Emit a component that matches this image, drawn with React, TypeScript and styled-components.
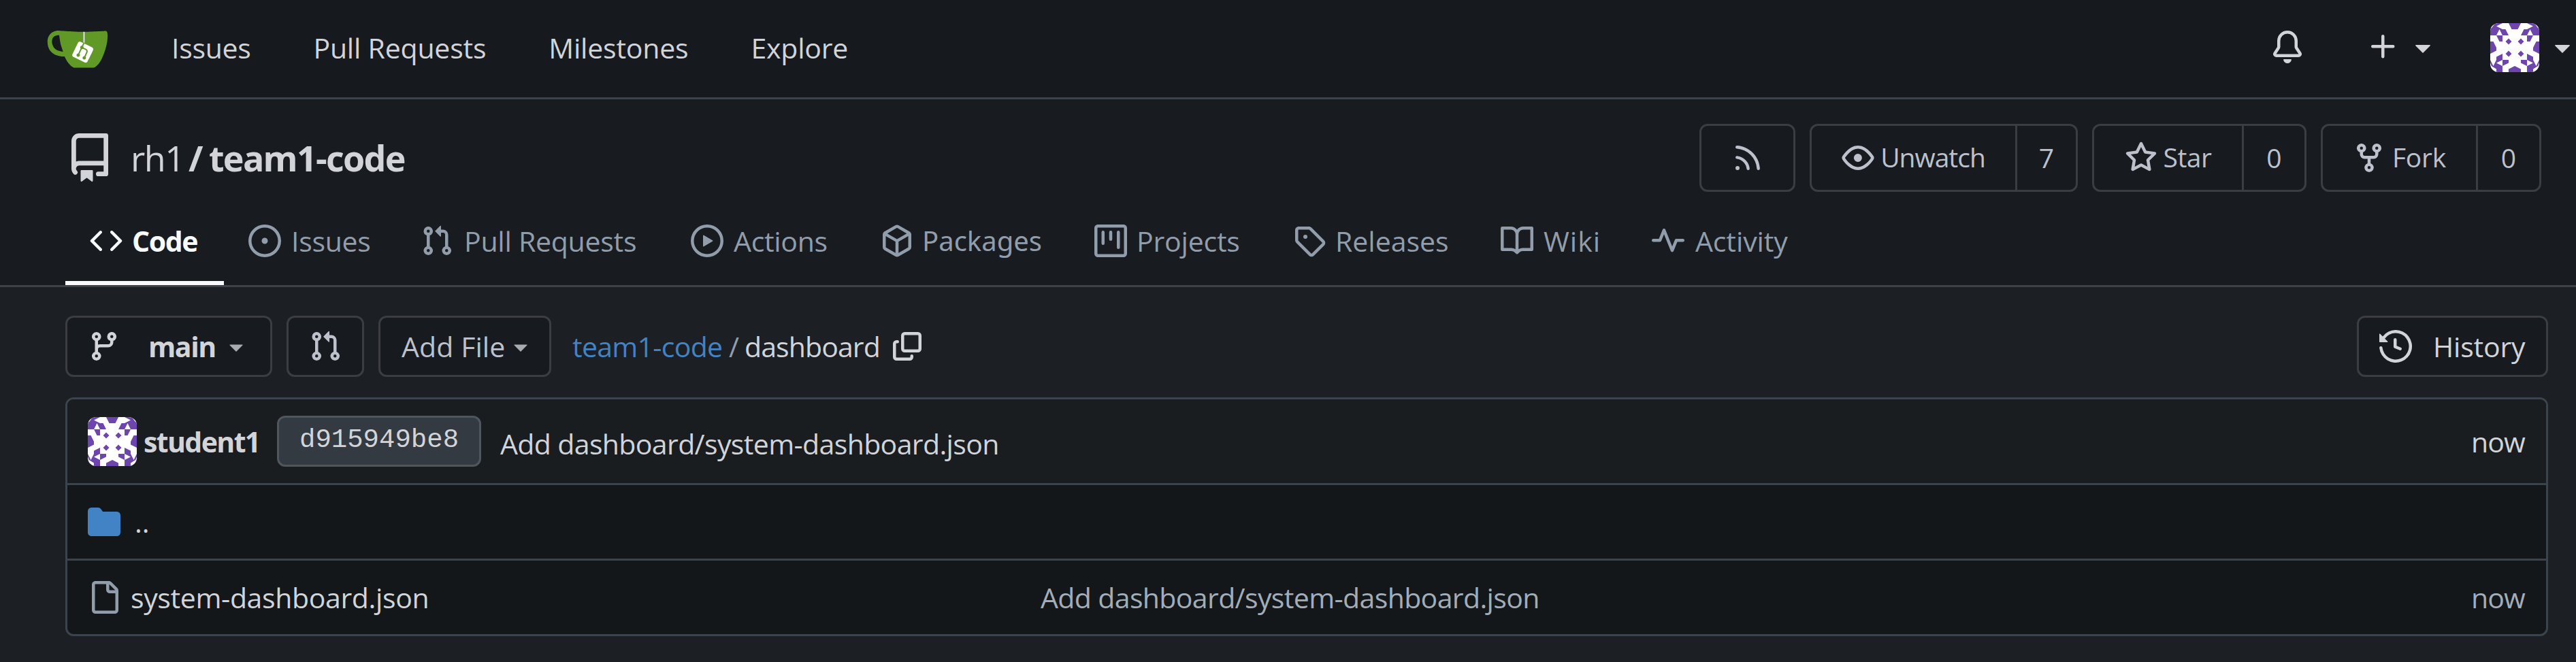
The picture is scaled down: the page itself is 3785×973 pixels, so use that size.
import React from 'react';
import styled, { createGlobalStyle } from 'styled-components';

const color = {
  body: '#1c1f24',
  nav: '#16191d',
  secondaryNav: '#181b20',
  button: '#171a1f',
  boxHeader: '#1a1d20',
  boxBody: '#131719',
  line: '#3b444c',
  buttonLine: '#3b3d42',
  text: '#d2d4d8',
  textLight: '#bcc1cb',
  textMuted: '#929dab',
  textCell: '#a3adb8',
  primary: '#4183c4',
  active: '#f8fafb',
};

const GlobalStyle = createGlobalStyle`
  *, *::before, *::after { box-sizing: border-box; }
  body {
    margin: 0;
    background: ${color.body};
    color: ${color.text};
    font-family: "Open Sans", "Noto Sans", sans-serif;
    font-size: 41px;
    line-height: 60px;
    overflow: hidden;
  }
`;

/* ---------- icons ---------- */

const paths = {
  repo: 'M2 2.5A2.5 2.5 0 0 1 4.5 0h8.75a.75.75 0 0 1 .75.75v12.5a.75.75 0 0 1-.75.75h-2.5a.75.75 0 0 1 0-1.5h1.75v-2h-8a1 1 0 0 0-.714 1.7.75.75 0 1 1-1.072 1.05A2.495 2.495 0 0 1 2 11.5Zm10.5-1h-8a1 1 0 0 0-1 1v6.708A2.486 2.486 0 0 1 4.5 9h8ZM5 12.25a.25.25 0 0 1 .25-.25h3.5a.25.25 0 0 1 .25.25v3.25a.25.25 0 0 1-.4.2l-1.45-1.087a.249.249 0 0 0-.3 0L5.4 15.7a.25.25 0 0 1-.4-.2Z',
  code: 'm11.28 3.22 4.25 4.25a.75.75 0 0 1 0 1.06l-4.25 4.25a.749.749 0 0 1-1.275-.326.749.749 0 0 1 .215-.734L13.94 8l-3.72-3.72a.749.749 0 0 1 .326-1.275.749.749 0 0 1 .734.215Zm-6.56 0a.751.751 0 0 1 1.042.018.751.751 0 0 1 .018 1.042L2.06 8l3.72 3.72a.749.749 0 0 1-.326 1.275.749.749 0 0 1-.734-.215L.47 8.53a.75.75 0 0 1 0-1.06Z',
  issue: 'M8 9.5a1.5 1.5 0 1 0 0-3 1.5 1.5 0 0 0 0 3ZM8 0a8 8 0 1 1 0 16A8 8 0 0 1 8 0ZM1.5 8a6.5 6.5 0 1 0 13 0 6.5 6.5 0 0 0-13 0Z',
  pull: 'M1.5 3.25a2.25 2.25 0 1 1 3 2.122v5.256a2.251 2.251 0 1 1-1.5 0V5.372A2.25 2.25 0 0 1 1.5 3.25Zm5.677-.177L9.573.677A.25.25 0 0 1 10 .854V2.5h1A2.5 2.5 0 0 1 13.5 5v5.628a2.251 2.251 0 1 1-1.5 0V5a1 1 0 0 0-1-1h-1v1.646a.25.25 0 0 1-.427.177L7.177 3.427a.25.25 0 0 1 0-.354ZM3.75 2.5a.75.75 0 1 0 0 1.5.75.75 0 0 0 0-1.5Zm0 9.5a.75.75 0 1 0 0 1.5.75.75 0 0 0 0-1.5Zm8.25.75a.75.75 0 1 0 1.5 0 .75.75 0 0 0-1.5 0Z',
  play: 'M8 0a8 8 0 1 1 0 16A8 8 0 0 1 8 0ZM1.5 8a6.5 6.5 0 1 0 13 0 6.5 6.5 0 0 0-13 0Zm4.879-2.773 4.264 2.559a.25.25 0 0 1 0 .428l-4.264 2.559A.25.25 0 0 1 6 10.559V5.442a.25.25 0 0 1 .379-.215Z',
  package: 'm8.878.392 5.25 3.045c.54.314.872.89.872 1.514v6.098a1.75 1.75 0 0 1-.872 1.514l-5.25 3.045a1.75 1.75 0 0 1-1.756 0l-5.25-3.045A1.75 1.75 0 0 1 1 11.049V4.951c0-.624.332-1.201.872-1.514L7.122.392a1.75 1.75 0 0 1 1.756 0ZM7.875 1.69l-4.63 2.685L8 7.133l4.755-2.758-4.63-2.685a.248.248 0 0 0-.25 0ZM2.5 5.677v5.372c0 .09.047.171.125.216l4.625 2.683V8.432Zm6.25 8.271 4.625-2.683a.25.25 0 0 0 .125-.216V5.677L8.75 8.432Z',
  project: 'M1.75 0h12.5C15.216 0 16 .784 16 1.75v12.5A1.75 1.75 0 0 1 14.25 16H1.75A1.75 1.75 0 0 1 0 14.25V1.75C0 .784.784 0 1.75 0ZM1.5 1.75v12.5c0 .138.112.25.25.25h12.5a.25.25 0 0 0 .25-.25V1.75a.25.25 0 0 0-.25-.25H1.75a.25.25 0 0 0-.25.25ZM11.75 3a.75.75 0 0 1 .75.75v7.5a.75.75 0 0 1-1.5 0v-7.5a.75.75 0 0 1 .75-.75Zm-8.25.75a.75.75 0 0 1 1.5 0v5.5a.75.75 0 0 1-1.5 0ZM8 3a.75.75 0 0 1 .75.75v3.5a.75.75 0 0 1-1.5 0v-3.5A.75.75 0 0 1 8 3Z',
  tag: 'M1 7.775V2.75C1 1.784 1.784 1 2.75 1h5.025c.464 0 .91.184 1.238.513l6.25 6.25a1.75 1.75 0 0 1 0 2.474l-5.026 5.026a1.75 1.75 0 0 1-2.474 0l-6.25-6.25A1.752 1.752 0 0 1 1 7.775Zm1.5 0c0 .066.026.13.073.177l6.25 6.25a.25.25 0 0 0 .354 0l5.025-5.025a.25.25 0 0 0 0-.354l-6.25-6.25a.25.25 0 0 0-.177-.073H2.75a.25.25 0 0 0-.25.25ZM6 5a1 1 0 1 1 0 2 1 1 0 0 1 0-2Z',
  book: 'M0 1.75A.75.75 0 0 1 .75 1h4.253c1.227 0 2.317.59 3 1.501A3.743 3.743 0 0 1 11.006 1h4.245a.75.75 0 0 1 .75.75v10.5a.75.75 0 0 1-.75.75h-4.507a2.25 2.25 0 0 0-1.591.659l-.622.621a.75.75 0 0 1-1.06 0l-.622-.621A2.25 2.25 0 0 0 5.258 13H.75a.75.75 0 0 1-.75-.75Zm7.251 10.324.004-5.073-.002-2.253A2.25 2.25 0 0 0 5.003 2.5H1.5v9h3.757a3.75 3.75 0 0 1 1.994.574ZM8.755 4.75l-.004 7.322a3.752 3.752 0 0 1 1.992-.572H14.5v-9h-3.495a2.25 2.25 0 0 0-2.25 2.25Z',
  pulse: 'M6 2c.306 0 .582.187.696.471L10 10.731l1.304-3.26A.751.751 0 0 1 12 7h3.25a.75.75 0 0 1 0 1.5h-2.742l-1.812 4.528a.751.751 0 0 1-1.392 0L6 4.77 4.696 8.03A.75.75 0 0 1 4 8.5H.75a.75.75 0 0 1 0-1.5h2.742l1.812-4.529A.751.751 0 0 1 6 2Z',
  rss: 'M2.002 2.725a.75.75 0 0 1 .797-.699C8.79 2.42 13.58 7.21 13.974 13.201a.75.75 0 0 1-1.497.098 10.502 10.502 0 0 0-9.776-9.776.747.747 0 0 1-.7-.798ZM2.84 7.05h-.002a7.002 7.002 0 0 1 6.113 6.111.75.75 0 0 1-1.49.178 5.503 5.503 0 0 0-4.8-4.8.75.75 0 0 1 .179-1.489ZM2 13a1 1 0 1 1 2 0 1 1 0 0 1-2 0Z',
  eye: 'M8 2c1.981 0 3.671.992 4.933 2.078 1.27 1.091 2.187 2.345 2.637 3.023a1.62 1.62 0 0 1 0 1.798c-.45.678-1.367 1.932-2.637 3.023C11.67 13.008 9.981 14 8 14c-1.981 0-3.671-.992-4.933-2.078C1.797 10.83.88 9.576.43 8.898a1.62 1.62 0 0 1 0-1.798c.45-.677 1.367-1.931 2.637-3.022C4.33 2.992 6.019 2 8 2ZM1.679 7.932a.12.12 0 0 0 0 .136c.411.622 1.241 1.75 2.366 2.717C5.176 11.758 6.527 12.5 8 12.5c1.473 0 2.825-.742 3.955-1.715 1.124-.967 1.954-2.096 2.366-2.717a.12.12 0 0 0 0-.136c-.412-.621-1.242-1.75-2.366-2.717C10.824 4.242 9.473 3.5 8 3.5c-1.473 0-2.825.742-3.955 1.715-1.124.967-1.954 2.096-2.366 2.717ZM8 10a2 2 0 1 1-.001-3.999A2 2 0 0 1 8 10Z',
  star: 'M8 .25a.75.75 0 0 1 .673.418l1.882 3.815 4.21.612a.75.75 0 0 1 .416 1.279l-3.046 2.97.719 4.192a.751.751 0 0 1-1.088.791L8 12.347l-3.766 1.98a.75.75 0 0 1-1.088-.79l.72-4.194L.818 6.374a.75.75 0 0 1 .416-1.28l4.21-.611L7.327.668A.75.75 0 0 1 8 .25Zm0 2.445L6.615 5.5a.75.75 0 0 1-.564.41l-3.097.45 2.24 2.184a.75.75 0 0 1 .216.664l-.528 3.084 2.769-1.456a.75.75 0 0 1 .698 0l2.77 1.456-.53-3.084a.75.75 0 0 1 .216-.664l2.24-2.183-3.096-.45a.75.75 0 0 1-.564-.41L8 2.694Z',
  fork: 'M5 5.372v.878c0 .414.336.75.75.75h4.5a.75.75 0 0 0 .75-.75v-.878a2.25 2.25 0 1 1 1.5 0v.878a2.25 2.25 0 0 1-2.25 2.25h-1.5v2.128a2.251 2.251 0 1 1-1.5 0V8.5h-1.5A2.25 2.25 0 0 1 3.5 6.25v-.878a2.25 2.25 0 1 1 1.5 0ZM5 3.25a.75.75 0 1 0-1.5 0 .75.75 0 0 0 1.5 0Zm6.75.75a.75.75 0 1 0 0-1.5.75.75 0 0 0 0 1.5Zm-3 8.75a.75.75 0 1 0-1.5 0 .75.75 0 0 0 1.5 0Z',
  branch: 'M9.5 3.25a2.25 2.25 0 1 1 3 2.122V6A2.5 2.5 0 0 1 10 8.5H6a1 1 0 0 0-1 1v1.128a2.251 2.251 0 1 1-1.5 0V5.372a2.25 2.25 0 1 1 1.5 0v1.836A2.493 2.493 0 0 1 6 7h4a1 1 0 0 0 1-1v-.628A2.25 2.25 0 0 1 9.5 3.25Zm-6 0a.75.75 0 1 0 1.5 0 .75.75 0 0 0-1.5 0Zm8.25-.75a.75.75 0 1 0 0 1.5.75.75 0 0 0 0-1.5ZM4.25 12a.75.75 0 1 0 0 1.5.75.75 0 0 0 0-1.5Z',
  history: 'm.427 1.927 1.215 1.215a8.002 8.002 0 1 1-1.6 5.685.75.75 0 1 1 1.493-.154 6.5 6.5 0 1 0 1.18-4.458l1.358 1.358A.25.25 0 0 1 3.896 6H.25A.25.25 0 0 1 0 5.75V2.104a.25.25 0 0 1 .427-.177ZM7.75 4a.75.75 0 0 1 .75.75v2.992l2.028.812a.75.75 0 0 1-.557 1.392l-2.5-1A.751.751 0 0 1 7 8.25v-3.5A.75.75 0 0 1 7.75 4Z',
  file: 'M2 1.75C2 .784 2.784 0 3.75 0h6.586c.464 0 .909.184 1.237.513l2.914 2.914c.329.328.513.773.513 1.237v9.586A1.75 1.75 0 0 1 13.25 16h-9.5A1.75 1.75 0 0 1 2 14.25Zm1.75-.25a.25.25 0 0 0-.25.25v12.5c0 .138.112.25.25.25h9.5a.25.25 0 0 0 .25-.25V6h-2.75A1.75 1.75 0 0 1 9 4.25V1.5Zm6.75.062V4.25c0 .138.112.25.25.25h2.688l-.011-.013-2.914-2.914-.013-.011Z',
  folder: 'M1.75 1A1.75 1.75 0 0 0 0 2.75v10.5C0 14.216.784 15 1.75 15h12.5A1.75 1.75 0 0 0 16 13.25v-8.5A1.75 1.75 0 0 0 14.25 3H7.5a.25.25 0 0 1-.2-.1l-.9-1.2C6.07 1.26 5.55 1 5 1H1.75Z',
  bell: 'M8 16a2 2 0 0 0 1.985-1.75c.017-.137-.097-.25-.235-.25h-3.5c-.138 0-.252.113-.235.25A2 2 0 0 0 8 16ZM3 5a5 5 0 0 1 10 0v2.947c0 .05.015.098.042.139l1.703 2.555A1.519 1.519 0 0 1 13.482 13H2.518a1.516 1.516 0 0 1-1.263-2.36l1.703-2.554A.255.255 0 0 0 3 7.947Zm5-3.5A3.5 3.5 0 0 0 4.5 5v2.947c0 .346-.102.683-.294.97l-1.703 2.556a.017.017 0 0 0-.003.01l.001.006c0 .002.002.004.004.006l.006.004.007.001h10.964l.007-.001.006-.004.004-.006.001-.007a.017.017 0 0 0-.003-.01l-1.703-2.554a1.745 1.745 0 0 1-.294-.97V5A3.5 3.5 0 0 0 8 1.5Z',
  plus: 'M7.75 2a.75.75 0 0 1 .75.75V7h4.25a.75.75 0 0 1 0 1.5H8.5v4.25a.75.75 0 0 1-1.5 0V8.5H2.75a.75.75 0 0 1 0-1.5H7V2.75A.75.75 0 0 1 7.75 2Z',
  caret: 'm4.427 7.427 3.396 3.396a.25.25 0 0 0 .354 0l3.396-3.396A.25.25 0 0 0 11.396 7H4.604a.25.25 0 0 0-.177.427Z',
};

type IconName = keyof typeof paths | 'copy';

const Svg = styled.svg<{ $size: number }>`
  display: block;
  flex: none;
  width: ${(p) => p.$size}px;
  height: ${(p) => p.$size}px;
  fill: currentColor;
`;

function Icon({ name, size = 48, className }: { name: IconName; size?: number; className?: string }) {
  return (
    <Svg viewBox="0 0 16 16" $size={size} className={className} aria-hidden="true">
      {name === 'copy' ? (
        <g fill="none" stroke="currentColor" strokeWidth="1.5" strokeLinecap="round" strokeLinejoin="round">
          <rect x="5.75" y="1.75" width="8.5" height="8.5" rx="1" />
          <path d="M3.25 5.75h-.5a1 1 0 0 0-1 1v6.5a1 1 0 0 0 1 1h6.5a1 1 0 0 0 1-1v-.5" />
        </g>
      ) : (
        <path d={paths[name]} />
      )}
    </Svg>
  );
}

const LogoSvg = styled.svg`
  flex: none;
  width: 90px;
  height: 90px;
  margin-right: 93px;
`;

function Logo() {
  return (
    <LogoSvg viewBox="0 0 640 640">
      <path
        fill="#fff"
        d="m395.9 484.2-126.9-61c-12.5-6-17.9-21.2-11.8-33.8l61-126.9c6-12.5 21.2-17.9 33.8-11.8 17.2 8.3 27.1 13 27.1 13l-.1-109.2 16.7-.1.1 117.1s57.4 24.2 83.1 40.1c3.7 2.3 10.2 6.8 12.9 14.4 2.1 6.1 2 13.1-1 19.3l-61 126.9c-6.2 12.7-21.4 18.1-33.9 12"
      />
      <path
        fill="#609926"
        d="M622.7 149.8c-4.1-4.1-9.6-4-9.6-4s-117.2 6.6-177.9 8c-13.3.3-26.5.6-39.6.7v117.2c-5.5-2.6-11.1-5.3-16.6-7.9 0-36.4-.1-109.2-.1-109.2-29 .4-89.2-2.2-89.2-2.2s-141.4-7.1-156.8-8.5c-9.8-.6-22.5-2.1-39 1.5-8.7 1.8-33.5 7.4-53.8 26.9C-4.9 212.4 6.6 276.2 8 285.8c1.7 11.7 6.9 44.2 31.7 72.5 45.8 56.1 144.4 54.8 144.4 54.8s12.1 28.9 30.6 55.5c25 33.1 50.7 58.9 75.7 62 63 0 188.9-.1 188.9-.1s12 .1 28.3-10.3c14-8.5 26.5-23.4 26.5-23.4S547 483 565 451.5c5.5-9.7 10.1-19.1 14.1-28 0 0 55.2-117.1 55.2-231.1-1.1-34.5-9.6-40.6-11.6-42.6M125.6 353.9c-25.9-8.5-36.9-18.7-36.9-18.7S69.6 321.8 60 295.4c-16.5-44.2-1.4-71.2-1.4-71.2s8.4-22.5 38.5-30c13.8-3.7 31-3.1 31-3.1s7.1 59.4 15.7 94.2c7.2 29.2 24.8 77.7 24.8 77.7s-26.1-3.1-43-9.1m300.3 107.6s-6.1 14.5-19.6 15.4c-5.8.4-10.3-1.2-10.3-1.2s-.3-.1-5.3-2.1l-112.9-55s-10.9-5.7-12.8-15.6c-2.2-8.1 2.7-18.1 2.7-18.1L322 273s4.8-9.7 12.2-13c.6-.3 2.3-1 4.5-1.5 8.1-2.1 18 2.8 18 2.8L467.4 315s12.6 5.7 15.3 16.2c1.9 7.4-.5 14-1.8 17.2-6.3 15.4-55 113.1-55 113.1"
      />
      <path
        fill="#609926"
        d="M326.8 380.1c-8.2.1-15.4 5.8-17.3 13.8s2 16.3 9.1 20c7.7 4 17.5 1.8 22.7-5.4 5.1-7.1 4.3-16.9-1.8-23.1l24-49.1c1.5.1 3.7.2 6.2-.5 4.1-.9 7.1-3.6 7.1-3.6 4.2 1.8 8.6 3.8 13.2 6.1 4.8 2.4 9.3 4.9 13.4 7.3.9.5 1.8 1.1 2.8 1.9 1.6 1.3 3.4 3.1 4.7 5.5 1.9 5.5-1.9 14.9-1.9 14.9-2.3 7.6-18.4 40.6-18.4 40.6-8.1-.2-15.3 5-17.7 12.5-2.6 8.1 1.1 17.3 8.9 21.3s17.4 1.7 22.5-5.3c5-6.8 4.6-16.3-1.1-22.6 1.9-3.7 3.7-7.4 5.6-11.3 5-10.4 13.5-30.4 13.5-30.4.9-1.7 5.7-10.3 2.7-21.3-2.5-11.4-12.6-16.7-12.6-16.7-12.2-7.9-29.2-15.2-29.2-15.2s0-4.1-1.1-7.1c-1.1-3.1-2.8-5.1-3.9-6.3 4.7-9.7 9.4-19.3 14.1-29-4.1-2-8.1-4-12.2-6.1-4.8 9.8-9.7 19.7-14.5 29.5-6.7-.1-12.9 3.5-16.1 9.4-3.4 6.3-2.7 14.1 1.9 19.8z"
      />
    </LogoSvg>
  );
}

const AvatarSvg = styled.svg`
  flex: none;
  width: 72px;
  height: 72px;
  border-radius: 12px;
  background: #fff;
`;

const avatarHalf =
  'M.8 0H2L1 .5 2 1H2.5L3 2H2L1.5 1 1 2H0V1L.3.7ZM1 2H2V3H1.5Z' +
  'M1 5.5 2 5V6L1 6.5 2 7V8H1V7.5L.2 7 0 6.5V6L.5 7 1 6ZM2 6H3V6.5L2 7Z' +
  'M0 3H.5L1 4V4.5L0 5ZM3 2.5 3.5 3 3 3.5 2.5 3ZM3 4.5 3.5 5 3 5.5 2.5 5Z';

function Avatar() {
  return (
    <AvatarSvg viewBox="0 0 8 8" fill="#6e45ad">
      <path d={avatarHalf} />
      <path d={avatarHalf} transform="matrix(-1 0 0 1 8 0)" />
      <path d="M3 0H5L4.5 1H3.5ZM3 8V7.5L4 7 5 7.5V8Z" />
    </AvatarSvg>
  );
}

/* ---------- text ---------- */

const Label = styled.span<{ $track?: number; $bold?: boolean }>`
  white-space: nowrap;
  letter-spacing: ${(p) => p.$track ?? 0}px;
  font-weight: ${(p) => (p.$bold ? 700 : 400)};
`;

/* ---------- top navigation ---------- */

const NavBar = styled.nav`
  display: flex;
  align-items: center;
  height: 146px;
  padding: 0 0 3px 69px;
  background: ${color.nav};
  border-bottom: 3px solid ${color.line};
`;

const NavLinks = styled.div`
  display: flex;
  flex: 1;
  gap: 92px;
`;

const NavActions = styled.div`
  display: flex;
  align-items: center;
  width: 448px;
  flex: none;

  > svg:nth-child(2) { margin-left: 93px; }
  > svg:nth-child(3) { margin-left: 10px; }
  > svg:nth-child(4) { margin-left: 75px; }
  > svg:nth-child(5) { margin-left: 10px; }
`;

const NavIcon = styled(Icon)`
  margin-bottom: 2px;
`;

/* ---------- repository header ---------- */

const RepoHeader = styled.header`
  background: ${color.secondaryNav};
  border-bottom: 3px solid ${color.line};
`;

const RepoTop = styled.div`
  display: flex;
  align-items: center;
  justify-content: space-between;
  height: 143px;
  padding: 36px 51px 7px 96px;
`;

const RepoTitle = styled.h1`
  display: flex;
  align-items: center;
  margin: 0;
  font-size: 52px;
  font-weight: 400;
  line-height: 74px;
`;

const Owner = styled(Label)`
  margin-left: 24px;
  width: 85px;
`;

const Slash = styled(Label)`
  width: 30px;
`;

const ButtonRow = styled.div`
  display: flex;
  gap: 21px;
`;

const ActionButton = styled.div<{ $width: number }>`
  display: flex;
  width: ${(p) => p.$width}px;
  height: 100px;
  overflow: hidden;
  border: 3px solid ${color.buttonLine};
  border-radius: 12px;
  background: ${color.button};
  color: ${color.textLight};
  font-size: 39px;
`;

const ActionMain = styled.div<{ $gap?: number }>`
  display: flex;
  flex: 1;
  align-items: center;
  justify-content: center;
  gap: ${(p) => p.$gap ?? 9}px;

  span { margin-top: -2px; }
`;

const ActionCount = styled.div<{ $width: number }>`
  display: flex;
  align-items: center;
  justify-content: center;
  width: ${(p) => p.$width}px;
  border-left: 3px solid ${color.buttonLine};
`;

const Tabs = styled.div`
  display: flex;
  height: 130px;
  padding-left: 96px;
`;

const Tab = styled.a<{ $width: number; $gap: number; $active?: boolean }>`
  display: flex;
  align-items: center;
  gap: ${(p) => p.$gap}px;
  width: ${(p) => p.$width}px;
  padding-left: 36px;
  border-top: 6px solid transparent;
  border-bottom: 6px solid ${(p) => (p.$active ? color.active : 'transparent')};
  color: ${(p) => (p.$active ? color.active : color.textMuted)};
`;

/* Noto Sans has the single-storey "g". */
const TabLabel = styled(Label)<{ $noto?: boolean }>`
  ${(p) => p.$noto && 'font-family: "Noto Sans", sans-serif; font-size: 40px;'}
`;

const tabs: { icon: IconName; label: string; width: number; gap: number; track?: number; noto?: boolean }[] = [
  { icon: 'code', label: 'Code', width: 233, gap: 14, track: -1.4 },
  { icon: 'issue', label: 'Issues', width: 253, gap: 15, track: -0.3 },
  { icon: 'pull', label: 'Pull Requests', width: 397, gap: 16, track: -0.25 },
  { icon: 'play', label: 'Actions', width: 279, gap: 15, track: -0.3 },
  { icon: 'package', label: 'Packages', width: 314, gap: 13, noto: true },
  { icon: 'project', label: 'Projects', width: 292, gap: 14, track: -0.2 },
  { icon: 'tag', label: 'Releases', width: 305, gap: 14 },
  { icon: 'book', label: 'Wiki', width: 222, gap: 15, track: 1 },
  { icon: 'pulse', label: 'Activity', width: 240, gap: 16, track: -0.1 },
];

/* ---------- file browser ---------- */

const Content = styled.main`
  padding: 42px 41px 38px 96px;
`;

const Toolbar = styled.div`
  display: flex;
  align-items: center;
  height: 90px;
`;

const ToolButton = styled.div<{ $width: number; $light?: boolean }>`
  display: flex;
  align-items: center;
  width: ${(p) => p.$width}px;
  height: 90px;
  margin-right: 21px;
  padding-left: 30px;
  border: 3px solid ${color.buttonLine};
  border-radius: 12px;
  background: ${color.button};
  color: ${(p) => (p.$light ? color.textLight : color.text)};
`;

const BranchName = styled(Label)`
  width: 110px;
  margin-left: 41px;
`;

const AddFile = styled(Label)`
  width: 156px;
  margin-left: 1px;
`;

const Caret = styled(Icon)`
  color: #a9abb0;
  margin-left: -2px;
`;

const Crumbs = styled.div`
  display: flex;
  align-items: center;
  flex: 1;
  margin-left: 10px;
`;

const CrumbLink = styled(Label)`
  width: 230px;
  color: ${color.primary};
`;

const CrumbDivider = styled(Label)`
  width: 23px;
  color: ${color.textMuted};
`;

const CrumbCurrent = styled(Label)`
  width: 215px;
`;

const HistoryButton = styled(ToolButton)`
  margin-right: 0;
  gap: 31px;
`;

const FileTable = styled.section`
  margin-top: 30px;
  border: 3px solid ${color.line};
  border-radius: 12px;
  background: ${color.boxBody};
  overflow: hidden;
`;

const CommitRow = styled.div`
  display: flex;
  align-items: center;
  height: 126px;
  padding: 0 31px 0 30px;
  background: ${color.boxHeader};
  border-bottom: 3px solid ${color.line};
`;

const Author = styled(Label)`
  width: 196px;
  margin-left: 10px;
`;

const Hash = styled.code`
  width: 300px;
  height: 75px;
  padding-left: 30px;
  border: 3px solid #50565e;
  border-radius: 12px;
  background: #343a42;
  font: 39px/66px "Liberation Mono", monospace;
  letter-spacing: 0;
`;

const CommitMessage = styled(Label)`
  flex: 1;
  margin: 6px 0 0 28px;
`;

const FileRow = styled.div`
  display: grid;
  grid-template-columns: 1400px 1fr auto;
  align-items: center;
  height: 108px;
  padding: 0 31px 0 30px;
  color: ${color.textCell};

  & + & {
    height: 111px;
    border-top: 3px solid ${color.line};
  }
`;

const FileName = styled.div<{ $gap: number; $icon: string }>`
  display: flex;
  align-items: center;
  gap: ${(p) => p.$gap}px;
  color: ${color.text};

  svg { color: ${(p) => p.$icon}; }
`;

export default function App() {
  return (
    <>
      <GlobalStyle />
      <NavBar>
        <Logo />
        <NavLinks>
          <Label $track={-0.3}>Issues</Label>
          <Label $track={-0.2}>Pull Requests</Label>
          <Label $track={-0.2}>Milestones</Label>
          <Label $track={-0.2}>Explore</Label>
        </NavLinks>
        <NavActions>
          <NavIcon name="bell" />
          <NavIcon name="plus" />
          <NavIcon name="caret" />
          <Avatar />
          <NavIcon name="caret" />
        </NavActions>
      </NavBar>

      <RepoHeader>
        <RepoTop>
          <RepoTitle>
            <Icon name="repo" size={72} />
            <Owner $track={-1.5}>rh1</Owner>
            <Slash $bold>/</Slash>
            <Label $bold $track={-1.7}>team1-code</Label>
          </RepoTitle>
          <ButtonRow>
            <ActionButton $width={141}>
              <ActionMain><Icon name="rss" /></ActionMain>
            </ActionButton>
            <ActionButton $width={394}>
              <ActionMain><Icon name="eye" /><Label $track={-1}>Unwatch</Label></ActionMain>
              <ActionCount $width={89}>7</ActionCount>
            </ActionButton>
            <ActionButton $width={315}>
              <ActionMain><Icon name="star" /><Label $track={-0.5}>Star</Label></ActionMain>
              <ActionCount $width={92}>0</ActionCount>
            </ActionButton>
            <ActionButton $width={324}>
              <ActionMain $gap={10}><Icon name="fork" /><Label $track={-0.2}>Fork</Label></ActionMain>
              <ActionCount $width={93}>0</ActionCount>
            </ActionButton>
          </ButtonRow>
        </RepoTop>
        <Tabs>
          {tabs.map((tab, i) => (
            <Tab key={tab.label} $width={tab.width} $gap={tab.gap} $active={i === 0}>
              <Icon name={tab.icon} />
              <TabLabel $bold={i === 0} $track={tab.track} $noto={tab.noto}>{tab.label}</TabLabel>
            </Tab>
          ))}
        </Tabs>
      </RepoHeader>

      <Content>
        <Toolbar>
          <ToolButton $width={304}>
            <Icon name="branch" />
            <BranchName $bold $track={-1.4}>main</BranchName>
            <Caret name="caret" size={42} />
          </ToolButton>
          <ToolButton $width={114} $light>
            <Icon name="pull" />
          </ToolButton>
          <ToolButton $width={254} $light>
            <AddFile $track={0.1}>Add File</AddFile>
            <Caret name="caret" size={42} />
          </ToolButton>
          <Crumbs>
            <CrumbLink $track={-0.7}>team1-code</CrumbLink>
            <CrumbDivider>/</CrumbDivider>
            <CrumbCurrent $track={-0.9}>dashboard</CrumbCurrent>
            <Icon name="copy" />
          </Crumbs>
          <HistoryButton $width={281}>
            <Icon name="history" />
            <Label $track={-0.2}>History</Label>
          </HistoryButton>
        </Toolbar>

        <FileTable>
          <CommitRow>
            <Avatar />
            <Author $bold $track={-1.6}>student1</Author>
            <Hash>d915949be8</Hash>
            <CommitMessage $track={-0.62}>Add dashboard/system-dashboard.json</CommitMessage>
            <Label $track={-0.9}>now</Label>
          </CommitRow>
          <FileRow>
            <FileName $gap={21} $icon={color.primary}>
              <Icon name="folder" />
              <Label>..</Label>
            </FileName>
          </FileRow>
          <FileRow>
            <FileName $gap={15} $icon={color.textMuted}>
              <Icon name="file" />
              <Label $track={-0.36}>system-dashboard.json</Label>
            </FileName>
            <Label $track={-0.62}>Add dashboard/system-dashboard.json</Label>
            <Label $track={-0.9}>now</Label>
          </FileRow>
        </FileTable>
      </Content>
    </>
  );
}
